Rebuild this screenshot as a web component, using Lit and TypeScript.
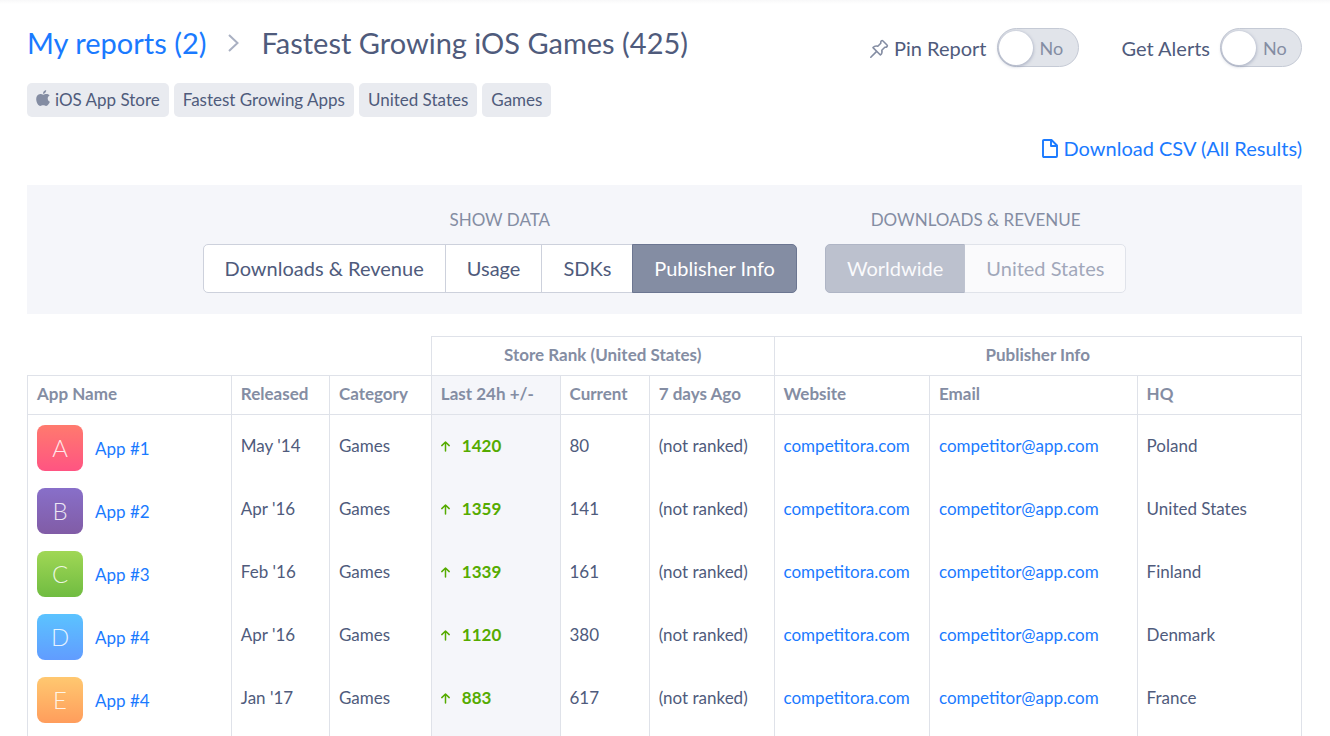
import { LitElement, html, css } from "lit";
import { customElement, property, state } from "lit/decorators.js";

interface AppRow {
  letter: string;
  name: string;
  released: string;
  category: string;
  change: number;
  current: number;
  country: string;
}

const ROWS: AppRow[] = [
  { letter: "A", name: "App #1", released: "May '14", category: "Games", change: 1420, current: 80, country: "Poland" },
  { letter: "B", name: "App #2", released: "Apr '16", category: "Games", change: 1359, current: 141, country: "United States" },
  { letter: "C", name: "App #3", released: "Feb '16", category: "Games", change: 1339, current: 161, country: "Finland" },
  { letter: "D", name: "App #4", released: "Apr '16", category: "Games", change: 1120, current: 380, country: "Denmark" },
  { letter: "E", name: "App #4", released: "Jan '17", category: "Games", change: 883, current: 617, country: "France" },
];

@customElement("toggle-switch")
class ToggleSwitch extends LitElement {
  @property() label = "";
  @property({ type: Boolean }) pin = false;
  @state() private on = false;

  static styles = css`
    :host {
      display: block;
    }
    .switch {
      display: flex;
      align-items: center;
      gap: 10px;
      font-size: 20px;
      line-height: 24px;
      color: #4f5b7c;
      cursor: pointer;
    }
    .caption {
      display: flex;
      align-items: center;
      gap: 5px;
    }
    .pin {
      width: 20px;
      height: 20px;
      margin-top: 2px;
    }
    .track {
      display: grid;
      align-items: center;
      box-sizing: border-box;
      width: 82px;
      height: 39px;
      border: 1px solid #c5cad5;
      border-radius: 20px;
      background: #e1e4ea;
    }
    .track > * {
      grid-area: 1 / 1;
    }
    .knob {
      appearance: none;
      width: 34px;
      height: 34px;
      margin: 0 0 0 1px;
      border-radius: 50%;
      background: #fff;
      box-shadow: 0 1px 3px 1px rgba(100, 112, 145, 0.35);
    }
    .knob:checked {
      justify-self: end;
    }
    .value {
      padding-left: 42px;
      font-size: 18px;
      color: #848da3;
    }
    .value.on {
      padding-left: 10px;
    }
  `;

  render() {
    return html`<label class="switch">
      <span class="caption">
        ${this.pin
          ? html`<svg class="pin" viewBox="0 0 20 20" fill="none" stroke="#848da3" stroke-width="1.6" stroke-linecap="round" stroke-linejoin="round" aria-hidden="true">
              <path d="M12.4 1.8Q13.200 1.200 14 2L18 6Q18.800 6.800 18 7.600 17 8.600 15.800 8.200L12.800 11.2C13.400 13.200 12.800 14.800 11.400 16L4 8.600C5.200 7.200 6.800 6.600 8.800 7.200L11.800 4.200Q11.400 2.800 12.400 1.800Z" />
              <path d="M7.400 12.600 1.800 18.200" />
            </svg>`
          : ""}
        ${this.label}
      </span>
      <span class="track">
        <span class="value ${this.on ? "on" : ""}">${this.on ? "Yes" : "No"}</span>
        <input class="knob" type="checkbox" role="switch" .checked=${this.on}
          @change=${(e: Event) => (this.on = (e.target as HTMLInputElement).checked)} />
      </span>
    </label>`;
  }
}

@customElement("app-root")
class AppRoot extends LitElement {
  @state() private view = "Publisher Info";

  static styles = css`
    :host {
      display: block;
      box-sizing: border-box;
      height: 100vh;
      overflow: hidden;
      padding: 23px 28px 0 27px;
      background: linear-gradient(#f8f8f9, #fff 4px);
      font-family: Lato, "Liberation Sans", sans-serif;
      font-size: 17px;
      line-height: 20px;
      color: #4f5b7c;
    }
    a {
      color: #1a7aff;
      text-decoration: none;
    }
    .top {
      display: flex;
      justify-content: space-between;
      align-items: flex-start;
    }
    .crumbs {
      display: flex;
      align-items: center;
      gap: 22px;
      margin: 0;
      font-size: 29px;
      line-height: 40px;
      font-weight: 400;
    }
    .chevron {
      width: 11px;
      height: 18px;
    }
    .switches {
      display: flex;
      gap: 43px;
      padding-top: 5px;
    }
    .tags {
      display: flex;
      gap: 5px;
      margin: 16px 0 0;
      padding: 0;
      list-style: none;
    }
    .tag {
      display: flex;
      align-items: center;
      gap: 5px;
      padding: 7px 9px;
      border-radius: 5px;
      background: #e9ebf0;
    }
    .apple {
      width: 14px;
      height: 16px;
      margin-bottom: 4px;
    }
    .export {
      display: flex;
      justify-content: flex-end;
      padding: 19px 0 25px;
      font-size: 20px;
      line-height: 24px;
    }
    .download {
      display: flex;
      align-items: center;
      gap: 6px;
    }
    .file {
      width: 16px;
      height: 19px;
    }
    .panel {
      display: flex;
      justify-content: center;
      gap: 28px;
      padding: 25px 0 21px;
      background: #f5f6fa;
    }
    .group {
      min-width: 0;
      text-align: center;
    }
    .legend {
      margin-bottom: 14px;
      color: #848da3;
    }
    .buttons {
      display: flex;
    }
    .seg {
      box-sizing: border-box;
      height: 49px;
      margin: 0 0 0 -1px;
      padding: 0 21px 1px;
      border: 1px solid #cdd1dc;
      background: #fff;
      color: #4f5b7c;
      font: 400 20px/24px Lato, "Liberation Sans", sans-serif;
    }
    .seg:first-child {
      margin-left: 0;
      border-radius: 5px 0 0 5px;
    }
    .seg:last-child {
      border-radius: 0 5px 5px 0;
    }
    .seg.active {
      border-color: #6c7691;
      background: #848da3;
      color: #fff;
    }
    .seg:disabled {
      opacity: 0.5;
    }
    .apps {
      width: 100%;
      margin-top: 22px;
      border-collapse: collapse;
      table-layout: fixed;
    }
    .c-name { width: 16%; }
    .c-released { width: 7.7%; }
    .c-category { width: 8%; }
    .c-change { width: 10.1%; }
    .c-current { width: 7%; }
    .c-ago { width: 9.8%; }
    .c-site { width: 12.2%; }
    .c-email { width: 16.3%; }
    .c-hq { width: 12.9%; }
    th {
      height: 36px;
      padding: 0 9px 2px;
      border: 1px solid #dfe2e9;
      color: #848da3;
      font-weight: 700;
      text-align: left;
    }
    .span {
      text-align: center;
    }
    td {
      height: 63px;
      box-sizing: border-box;
      padding: 0 9px;
      border: solid #dfe2e9;
      border-width: 0 1px;
      white-space: nowrap;
    }
    td.blank {
      height: auto;
      border: 0;
    }
    .shaded {
      background: #f5f6fa;
    }
    .app {
      display: flex;
      align-items: center;
      gap: 12px;
      padding-top: 3px;
    }
    .app a {
      padding-top: 2px;
    }
    .tile {
      width: 46px;
      border-radius: 8px;
      color: rgba(255, 255, 255, 0.85);
      font-size: 24px;
      font-weight: 300;
      line-height: 46px;
      text-align: center;
    }
    .tile.A { background: linear-gradient(#ff7a6e, #ff5482); }
    .tile.B { background: linear-gradient(#886fc9, #815ca6); }
    .tile.C { background: linear-gradient(#a0d755, #70bc41); }
    .tile.D { background: linear-gradient(#5bc3ff, #619cff); }
    .tile.E { background: linear-gradient(#ffc870, #ff9d5c); }
    .change {
      display: flex;
      align-items: center;
      gap: 12px;
      color: #55ab00;
      font-weight: 700;
    }
    .arrow {
      width: 9px;
      height: 11px;
    }
  `;

  private segment(name: string) {
    return html`<button type="button" class="seg ${this.view === name ? "active" : ""}"
      aria-pressed=${this.view === name} @click=${() => (this.view = name)}>${name}</button>`;
  }

  private row(r: AppRow) {
    return html`<tr>
      <td><div class="app"><span class="tile ${r.letter}">${r.letter}</span><a href="#app">${r.name}</a></div></td>
      <td>${r.released}</td>
      <td>${r.category}</td>
      <td class="shaded"><div class="change">
        <svg class="arrow" viewBox="0 0 9 11" fill="none" stroke="currentColor" stroke-width="1.5" stroke-linecap="round" stroke-linejoin="round" aria-hidden="true">
          <path d="M4.5 10V1M.8 4.6 4.5 1 8.2 4.6" />
        </svg>${r.change}</div></td>
      <td>${r.current}</td>
      <td>(not ranked)</td>
      <td><a href="#website">competitora.com</a></td>
      <td><a href="#email">competitor@app.com</a></td>
      <td>${r.country}</td>
    </tr>`;
  }

  render() {
    return html`
      <header class="top">
        <h1 class="crumbs">
          <a href="#reports">My reports (2)</a>
          <svg class="chevron" viewBox="0 0 11 18" fill="none" stroke="#a9b0c2" stroke-width="2" aria-hidden="true">
            <path d="M1 1 9.500 9 1 17" />
          </svg>
          <span>Fastest Growing iOS Games (425)</span>
        </h1>
        <div class="switches">
          <toggle-switch label="Pin Report" pin></toggle-switch>
          <toggle-switch label="Get Alerts"></toggle-switch>
        </div>
      </header>
      <ul class="tags">
        <li class="tag">
          <svg class="apple" viewBox="0 0 14 16" fill="#848da3" aria-hidden="true">
            <path d="M11.7 8.5c0-1.4.8-2.4 1.9-3C12.9 4.5 11.9 4 10.5 4 9.2 4 8.2 4.7 7.3 4.7 6.4 4.7 5.4 4 4.2 4 1.8 4.1.2 6 .2 8.9.2 12.2 2.3 15.9 4.2 15.9 5.200 15.900 5.900 15.200 7.200 15.200 8.500 15.200 9 15.900 10.100 15.900 11.900 15.900 13.400 13.300 13.900 11.800 12.500 11.200 11.700 10 11.700 8.500ZM9.400 2.500C10 1.800 10.300.9 10.200 0 8.500.2 6.800 1.800 7 3.800 8 3.800 8.800 3.200 9.400 2.500Z" />
          </svg>iOS App Store
        </li>
        <li class="tag">Fastest Growing Apps</li>
        <li class="tag">United States</li>
        <li class="tag">Games</li>
      </ul>
      <div class="export">
        <a class="download" href="#csv">
          <svg class="file" viewBox="0 0 16 19" fill="none" stroke="currentColor" stroke-width="1.9" stroke-linejoin="round" aria-hidden="true">
            <path d="M2 1H9.500L15 6.500V17Q15 18 14 18H2Q1 18 1 17V2Q1 1 2 1ZM9 1V7H15" />
          </svg>Download CSV (All Results)
        </a>
      </div>
      <section class="panel">
        <div class="group" role="group" aria-labelledby="show">
          <div class="legend" id="show">SHOW DATA</div>
          <div class="buttons">
            ${["Downloads & Revenue", "Usage", "SDKs", "Publisher Info"].map((n) => this.segment(n))}
          </div>
        </div>
        <div class="group" role="group" aria-labelledby="region">
          <div class="legend" id="region">DOWNLOADS &amp; REVENUE</div>
          <div class="buttons">
            <button type="button" class="seg active" disabled>Worldwide</button>
            <button type="button" class="seg" disabled>United States</button>
          </div>
        </div>
      </section>
      <table class="apps">
        <colgroup>
          <col class="c-name" /><col class="c-released" /><col class="c-category" />
          <col class="c-change" /><col class="c-current" /><col class="c-ago" />
          <col class="c-site" /><col class="c-email" /><col class="c-hq" />
        </colgroup>
        <thead>
          <tr>
            <td class="blank" colspan="3"></td>
            <th class="span" colspan="3" scope="colgroup">Store Rank (United States)</th>
            <th class="span" colspan="3" scope="colgroup">Publisher Info</th>
          </tr>
          <tr>
            <th scope="col">App Name</th>
            <th scope="col">Released</th>
            <th scope="col">Category</th>
            <th scope="col" class="shaded">Last 24h +/-</th>
            <th scope="col">Current</th>
            <th scope="col">7 days Ago</th>
            <th scope="col">Website</th>
            <th scope="col">Email</th>
            <th scope="col">HQ</th>
          </tr>
        </thead>
        <tbody>
          ${ROWS.map((r) => this.row(r))}
        </tbody>
        <tfoot aria-hidden="true">
          <tr><td></td><td></td><td></td><td class="shaded"></td><td></td><td></td><td></td><td></td><td></td></tr>
        </tfoot>
      </table>
    `;
  }
}
